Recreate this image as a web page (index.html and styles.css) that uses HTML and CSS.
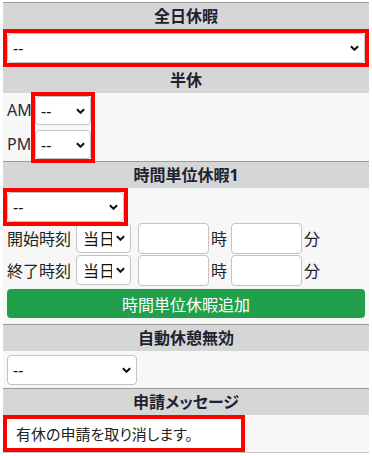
FILE: index.html
```html
<!DOCTYPE html>
<html>
	<head>
		<meta charset="UTF-8">
		<title>休暇申請</title>
		<link rel="stylesheet" href="styles.css">
	</head>

	<body>

		<div class="sheet">

			<div class="head">全日休暇</div>
			<div class="cell">
				<div class="mark">
					<select class="pick wide"><option>--</option></select>
				</div>
			</div>

			<div class="head">半休</div>
			<div class="cell halfday">
				<div class="ampm">
					<span>AM</span>
					<span>PM</span>
				</div>
				<div class="pair mark">
					<select class="pick tiny"><option>--</option></select>
					<select class="pick tiny"><option>--</option></select>
				</div>
			</div>

			<div class="head">時間単位休暇1</div>
			<div class="cell hourly">
				<div class="mark mid">
					<select class="pick wide"><option>--</option></select>
				</div>
				<div class="time-row">
					<span class="label">開始時刻</span>
					<select class="pick day"><option>当日</option></select>
					<input class="num" type="text">
					<span>時</span>
					<input class="num" type="text">
					<span>分</span>
				</div>
				<div class="time-row">
					<span class="label">終了時刻</span>
					<select class="pick day"><option>当日</option></select>
					<input class="num" type="text">
					<span>時</span>
					<input class="num" type="text">
					<span>分</span>
				</div>
				<button class="add" type="button">時間単位休暇追加</button>
			</div>

			<div class="head">自動休憩無効</div>
			<div class="cell">
				<select class="pick rest"><option>--</option></select>
			</div>

			<div class="head">申請メッセージ</div>
			<div class="cell last">
				<div class="note mark">有休の申請を取り消します。</div>
			</div>

		</div>

	</body>

</html>
```

FILE: styles.css
```css
* { margin: 0; padding: 0; box-sizing: border-box }

body {
	background: #fff;
	font-family: "Noto Sans", "Noto Sans CJK JP", sans-serif;
	font-size: 16px;
	color: #222;
}

.sheet {
	width: 366px;
	margin: 2px 0 0 3px;
}

.head {
	height: 27px;
	line-height: 26px;
	border-top: 1px solid #9b9b9b;
	background: #d5d7d7;
	text-align: center;
	font-weight: bold;
	color: #1e2130;
	font-feature-settings: "palt";
}

.cell {
	background: #f7f7f7;
	padding: 4px 4px 3px;
}

.cell.last {
	padding-bottom: 4px;
	border-bottom: 1px solid #c8c8c8;
}

/* red highlight boxes, square corners */
.mark { outline: 4px solid #f00 }

.pick {
	appearance: none;
	-webkit-appearance: none;
	display: block;
	height: 30px;
	padding: 0 18px 0 5px;
	border: 1px solid #c4c4c4;
	border-radius: 4px;
	background: #fff url("data:image/svg+xml,%3Csvg xmlns='http://www.w3.org/2000/svg' viewBox='0 0 10 6'%3E%3Cpath d='M1 1l4 4 4-4' fill='none' stroke='%23111' stroke-width='2.2'/%3E%3C/svg%3E") no-repeat right 5px center / 9px 6px;
	font: inherit;
	color: #111;
}

.wide { width: 100% }
.mid { width: 117px }
.rest { width: 130px }
.tiny { width: 56px; height: 29px }
.day { width: 55px; padding-left: 6px }

.halfday {
	display: flex;
	padding: 3px 4px 2px;
}

.ampm {
	display: flex;
	flex-direction: column;
	gap: 5px;
	width: 28px;
}

.ampm span {
	height: 29px;
	line-height: 29px;
	color: #2a2a3a;
}

.pair {
	display: flex;
	flex-direction: column;
	gap: 5px;
}

.hourly { padding-bottom: 6px }

.time-row {
	display: flex;
	align-items: center;
	height: 32px;
	font-family: "Noto Sans CJK JP", sans-serif;
}

.time-row .label {
	width: 69px;
}

.num {
	width: 71px;
	height: 31px;
	margin: 0 2px 0 7px;
	border: 1px solid #c4c4c4;
	border-radius: 4px;
	background: #fff;
}

.time-row span + .num { margin-left: 4px }

.add {
	display: block;
	width: 100%;
	height: 29px;
	margin-top: 3px;
	border: 0;
	border-radius: 4px;
	background: #20a04b;
	color: #fff;
	font: 16px "Noto Sans CJK JP", sans-serif;
}

.note {
	width: 234px;
	height: 29px;
	line-height: 29px;
	padding: 0 9px;
	background: #fff;
	font-family: "Noto Sans CJK JP", sans-serif;
	font-size: 15px;
	font-feature-settings: "palt";
}
```
